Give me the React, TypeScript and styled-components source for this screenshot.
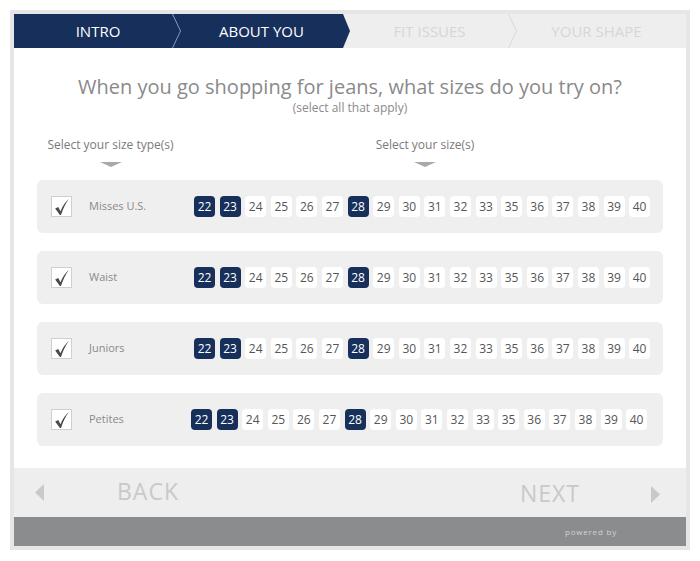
import React from "react";
import styled, { createGlobalStyle } from "styled-components";

const GlobalStyle = createGlobalStyle`
  html, body { margin: 0; padding: 0; background: #ffffff; }
  body { font-family: "Open Sans", "Liberation Sans", sans-serif; }
`;

const Frame = styled.div`
  margin: 10px;
  width: 672px;
  height: 532px;
  border: 4px solid #e6e6e6;
  display: flex;
  flex-direction: column;
  background: #fff;
`;

const TabBar = styled.div`
  display: flex;
  height: 34px;
  background: #eeeeee;
  flex: none;
`;

const Tab = styled.div<{ $active: boolean; $arrow: boolean; $pad: number }>`
  position: relative;
  width: 168px;
  height: 34px;
  display: flex;
  align-items: center;
  justify-content: center;
  padding-right: ${(p) => p.$pad}px;
  box-sizing: border-box;
  font-size: 15px;
  text-transform: uppercase;
  color: ${(p) => (p.$active ? "#ffffff" : "#d6d6d6")};
  background: ${(p) => (p.$active ? "#172f5b" : "transparent")};
  clip-path: ${(p) =>
    p.$arrow
      ? "polygon(0 0, calc(100% - 7px) 0, 100% 50%, calc(100% - 7px) 100%, 0 100%)"
      : "none"};
`;

const ChevronSvg = styled.svg`
  position: absolute;
  right: 0;
  top: 0;
`;

const Body = styled.div`
  flex: 1;
  display: flex;
  flex-direction: column;
  padding: 0 23px;
`;

const Title = styled.h1`
  margin: 25px 0 0;
  text-align: center;
  font-family: "Open Sans", sans-serif;
  font-weight: 400;
  font-size: 20px;
  line-height: 28px;
  color: #8a8a8a;
`;

const Subtitle = styled.div`
  text-align: center;
  font-size: 12px;
  line-height: 13px;
  color: #8a8a8a;
`;

const Headers = styled.div`
  display: flex;
  margin-top: 23px;
  height: 43px;
`;

const HeaderCol = styled.div<{ $left: number; $width: number }>`
  margin-left: ${(p) => p.$left}px;
  width: ${(p) => p.$width}px;
  display: flex;
  flex-direction: column;
  align-items: center;
`;

const HeaderText = styled.div`
  font-size: 12px;
  line-height: 16px;
  color: #7a7a7a;
  white-space: nowrap;
`;

const DownArrow = styled.div`
  margin-top: 9px;
  width: 0;
  height: 0;
  border-left: 11px solid transparent;
  border-right: 11px solid transparent;
  border-top: 5px solid #a9a9a9;
`;

const Rows = styled.div`
  display: flex;
  flex-direction: column;
  gap: 18px;
`;

const Row = styled.div`
  height: 53px;
  background: #efefef;
  border-radius: 6px;
  display: flex;
  align-items: center;
  padding-left: 14px;
`;

const CheckBox = styled.div`
  width: 19px;
  height: 19px;
  border: 1px solid #cfcfcf;
  background: #ffffff;
  display: flex;
  align-items: center;
  justify-content: center;
  flex: none;
`;

const Label = styled.div`
  margin-left: 17px;
  margin-top: -2px;
  width: 105px;
  font-size: 11px;
  color: #8a8a8a;
`;

const Sizes = styled.div<{ $shift: number }>`
  display: flex;
  gap: 4.6px;
  margin-left: ${(p) => p.$shift}px;
`;

const Size = styled.div<{ $sel: boolean }>`
  width: 21px;
  height: 21px;
  border-radius: 4px;
  display: flex;
  align-items: center;
  justify-content: center;
  font-size: 12px;
  color: ${(p) => (p.$sel ? "#ffffff" : "#555555")};
  background: ${(p) => (p.$sel ? "#172f5b" : "#ffffff")};
`;

const Nav = styled.div`
  height: 49px;
  flex: none;
  background: #eeeeee;
  display: flex;
  align-items: center;
  padding: 0 26px 0 21px;
`;

const NavText = styled.div<{ $ml: number; $mt: number }>`
  margin-left: ${(p) => p.$ml}px;
  margin-top: ${(p) => p.$mt}px;
  font-size: 23px;
  letter-spacing: 1px;
  color: #c9c9c9;
`;

const Spacer = styled.div`
  flex: 1;
`;

const Footer = styled.div`
  height: 29px;
  flex: none;
  background: #8b8c8e;
  display: flex;
  align-items: center;
  justify-content: flex-end;
  padding-right: 69px;
`;

const Powered = styled.div`
  font-size: 8px;
  letter-spacing: 0.8px;
  color: #d2d2d2;
`;

const sizes = [22, 23, 24, 25, 26, 27, 28, 29, 30, 31, 32, 33, 35, 36, 37, 38, 39, 40];
const selected = new Set([22, 23, 28]);
const types = ["Misses U.S.", "Waist", "Juniors", "Petites"];

const tabs = [
  { name: "INTRO", active: true, arrow: false, line: "#8b9ab8", pad: 0 },
  { name: "ABOUT YOU", active: true, arrow: true, line: "", pad: 9 },
  { name: "FIT ISSUES", active: false, arrow: false, line: "#d9d9d9", pad: 9 },
  { name: "YOUR SHAPE", active: false, arrow: false, line: "", pad: 11 },
];

function Check() {
  return (
    <svg width="17" height="18" viewBox="0 0 16 17">
      <path
        d="M2 10 L5 8.5 L7 12.5 Q10 5 15 1 Q11 6 7.5 16 L6.5 16 Z"
        fill="#4a4a4a"
      />
    </svg>
  );
}

export default function App() {
  return (
    <>
      <GlobalStyle />
      <Frame>
        <TabBar>
          {tabs.map((t) => (
            <Tab key={t.name} $active={t.active} $arrow={t.arrow} $pad={t.pad}>
              {t.name}
              {t.line && (
                <ChevronSvg width="10" height="34" viewBox="0 0 10 34">
                  <polyline points="0.5,0 8.5,17 0.5,34" fill="none" stroke={t.line} strokeWidth="1" />
                </ChevronSvg>
              )}
            </Tab>
          ))}
        </TabBar>
        <Body>
          <Title>When you go shopping for jeans, what sizes do you try on?</Title>
          <Subtitle>(select all that apply)</Subtitle>
          <Headers>
            <HeaderCol $left={10} $width={127}>
              <HeaderText>Select your size type(s)</HeaderText>
              <DownArrow />
            </HeaderCol>
            <HeaderCol $left={201} $width={100}>
              <HeaderText>Select your size(s)</HeaderText>
              <DownArrow />
            </HeaderCol>
          </Headers>
          <Rows>
            {types.map((t, i) => (
              <Row key={t}>
                <CheckBox>
                  <Check />
                </CheckBox>
                <Label>{t}</Label>
                <Sizes $shift={i === 3 ? -3 : 0}>
                  {sizes.map((s) => (
                    <Size key={s} $sel={selected.has(s)}>
                      {s}
                    </Size>
                  ))}
                </Sizes>
              </Row>
            ))}
          </Rows>
        </Body>
        <Nav>
          <svg width="9" height="17" viewBox="0 0 9 17">
            <polygon points="9,0 0,8.5 9,17" fill="#c9c9c9" />
          </svg>
          <NavText $ml={73} $mt={-4}>BACK</NavText>
          <Spacer />
          <NavText $ml={0} $mt={0}>NEXT</NavText>
          <svg width="9" height="17" viewBox="0 0 9 17" style={{ marginLeft: 71, marginTop: 3 }}>
            <polygon points="0,0 9,8.5 0,17" fill="#c9c9c9" />
          </svg>
        </Nav>
        <Footer>
          <Powered>powered by</Powered>
        </Footer>
      </Frame>
    </>
  );
}
